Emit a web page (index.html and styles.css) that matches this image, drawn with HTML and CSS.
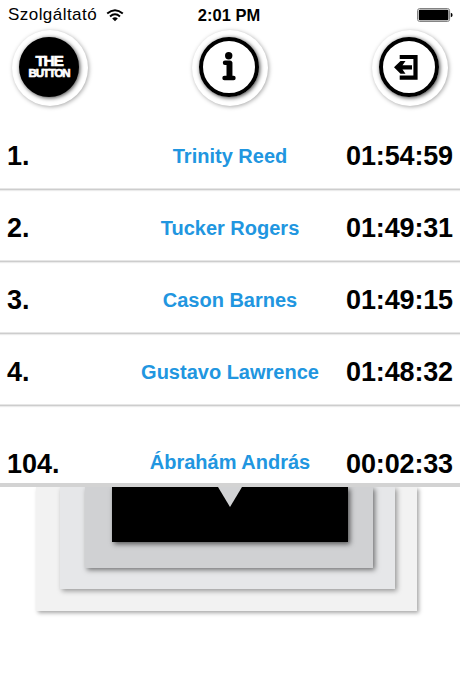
FILE: index.html
```
<!DOCTYPE html>
<html lang="hu">
<head>
<meta charset="utf-8">
<title>The Button</title>
<link rel="stylesheet" href="styles.css">
</head>
<body>
<div class="screen">
  <header class="status">
    <div class="carrier"><span>Szolgáltató</span>
      <svg class="wifi" width="18" height="13" viewBox="0 0 18 13" fill="none" stroke="#000" stroke-width="2"><path d="M1.2 4.5Q9-2 16.8 4.5M4 7.4Q9 3.2 14 7.4"/><path d="M6.2 9.4Q9 7.2 11.8 9.4L9 12.2Z" fill="#000" stroke="none"/></svg>
    </div>
    <div class="clock">2:01 PM</div>
    <svg class="battery" width="36" height="14" viewBox="0 0 36 14"><rect x=".6" y=".6" width="32" height="12.8" rx="2" fill="#fff" stroke="#777" stroke-width="1"/><rect x="1.8" y="1.8" width="29.6" height="10.4" rx="1" fill="#000"/><path d="M33.8 4.7q1.8.4 1.8 2.3t-1.8 2.3z" fill="#000"/></svg>
  </header>
  <nav class="nav">
    <div class="disc"><div class="ring ring-solid"><span class="logo-top">THE</span><span class="logo-bottom">BUTTON</span></div></div>
    <div class="disc"><div class="ring">
      <svg width="60" height="60" viewBox="0 0 60 60"><circle cx="29.700" cy="18.700" r="3.700"/><path d="M26 25.700H31V41M25.500 41H34.500" fill="none" stroke="#000" stroke-width="4.400" stroke-linecap="round" stroke-linejoin="round"/><path d="M27.500 25h5.800v16h-5.800z"/></svg>
    </div></div>
    <div class="disc"><div class="ring">
      <svg width="60" height="60" viewBox="0 0 60 60"><path d="M20.700 20H36.500V40.700H20.700" fill="none" stroke="#000" stroke-width="4.200"/><path d="M15 30.300L21.500 24H26.500L23.500 28.200H33V32.500H23.500L26.500 36.700H21.500Z"/></svg>
    </div></div>
  </nav>
  <main class="board">
    <div class="row"><span class="rank">1.</span><span class="name">Trinity Reed</span><span class="time">01:54:59</span></div>
    <div class="row"><span class="rank">2.</span><span class="name">Tucker Rogers</span><span class="time">01:49:31</span></div>
    <div class="row"><span class="rank">3.</span><span class="name">Cason Barnes</span><span class="time">01:49:15</span></div>
    <div class="row"><span class="rank">4.</span><span class="name">Gustavo Lawrence</span><span class="time">01:48:32</span></div>
    <div class="row own"><span class="rank">104.</span><span class="name">Ábrahám András</span><span class="time">00:02:33</span></div>
    <svg class="pointer" width="24" height="20" viewBox="0 0 24 20"><path d="M0 0H24L12 20Z" fill="#d1d2d4"/></svg>
  </main>
  <div class="layer outer"><div class="layer middle"><div class="layer inner"><div class="layer core"></div></div></div></div>
</div>
</body>
</html>
```

FILE: styles.css
```
* { box-sizing: border-box; }
body { margin: 0; background: #fff; color: #000; font-family: "Liberation Sans", Arial, sans-serif; }
.screen { width: 460px; height: 690px; overflow: hidden; }
.status { display: grid; grid-template-columns: 1fr auto 1fr; align-items: center; height: 30px; padding: 0 7px 0 8px; font-size: 17px; }
.carrier { display: flex; align-items: center; gap: 9px; letter-spacing: .45px; }
.clock { font-weight: bold; font-size: 16.500px; margin-right: 3px; }
.battery { justify-self: end; }
.nav { display: flex; justify-content: space-between; height: 88px; padding: 0 12px; }
.disc { width: 76px; height: 76px; padding: 7px; border-radius: 50%; background: #fff; box-shadow: 1px 1px 4px rgba(0,0,0,.34); }
.ring { display: flex; flex-direction: column; align-items: center; justify-content: center; width: 60px; height: 60px; border: 4px solid #000; border-radius: 50%; box-shadow: 1px 1px 4px rgba(0,0,0,.75); }
.ring svg { flex: none; }
.ring-solid { background: #000; color: #fff; font-weight: bold; line-height: 1; }
.logo-top { font-size: 15.500px; line-height: 12px; -webkit-text-stroke: .7px #fff; letter-spacing: -1.300px; }
.logo-bottom { font-size: 11.500px; line-height: 12px; -webkit-text-stroke: .7px #fff; letter-spacing: -1.100px; }
.board { position: relative; z-index: 1; height: 369px; background: #fff; border-bottom: 4px solid #d3d3d3; font-weight: bold; }
.row { display: grid; grid-template-columns: 1fr auto 1fr; align-items: center; height: 72px; padding: 5px 7px 0; border-bottom: 1px solid #cdcdcd; box-shadow: inset 0 -1px 0 #e6e6e6, 0 1px 1px rgba(0,0,0,.08); }
.row > span { line-height: 32px; }
.rank, .time { font-size: 27px; }
.time { justify-self: end; letter-spacing: -.15px; }
.name { padding-bottom: 1px; color: #2196e0; font-size: 20px; }
.own { height: 77px; padding-top: 38px; border: 0; box-shadow: none; }
.own .name { padding-bottom: 3px; }
.pointer { position: absolute; left: 218px; top: 369px; }
.outer { width: 381px; height: 124px; margin-left: 36px; padding: 0 22px 22px 24px; background: #f2f2f2; box-shadow: 2px 2px 4px rgba(0,0,0,.35); }
.middle { height: 102px; padding: 0 22px 21px 25px; background: #e6e7e9; box-shadow: 2px 2px 5px rgba(0,0,0,.38); }
.inner { height: 81px; padding: 0 25px 26px 27px; background: #d0d1d3; box-shadow: 2px 2px 5px rgba(0,0,0,.5); }
.core { height: 55px; background: #000; box-shadow: 2px 2px 5px rgba(0,0,0,.6); }
```
